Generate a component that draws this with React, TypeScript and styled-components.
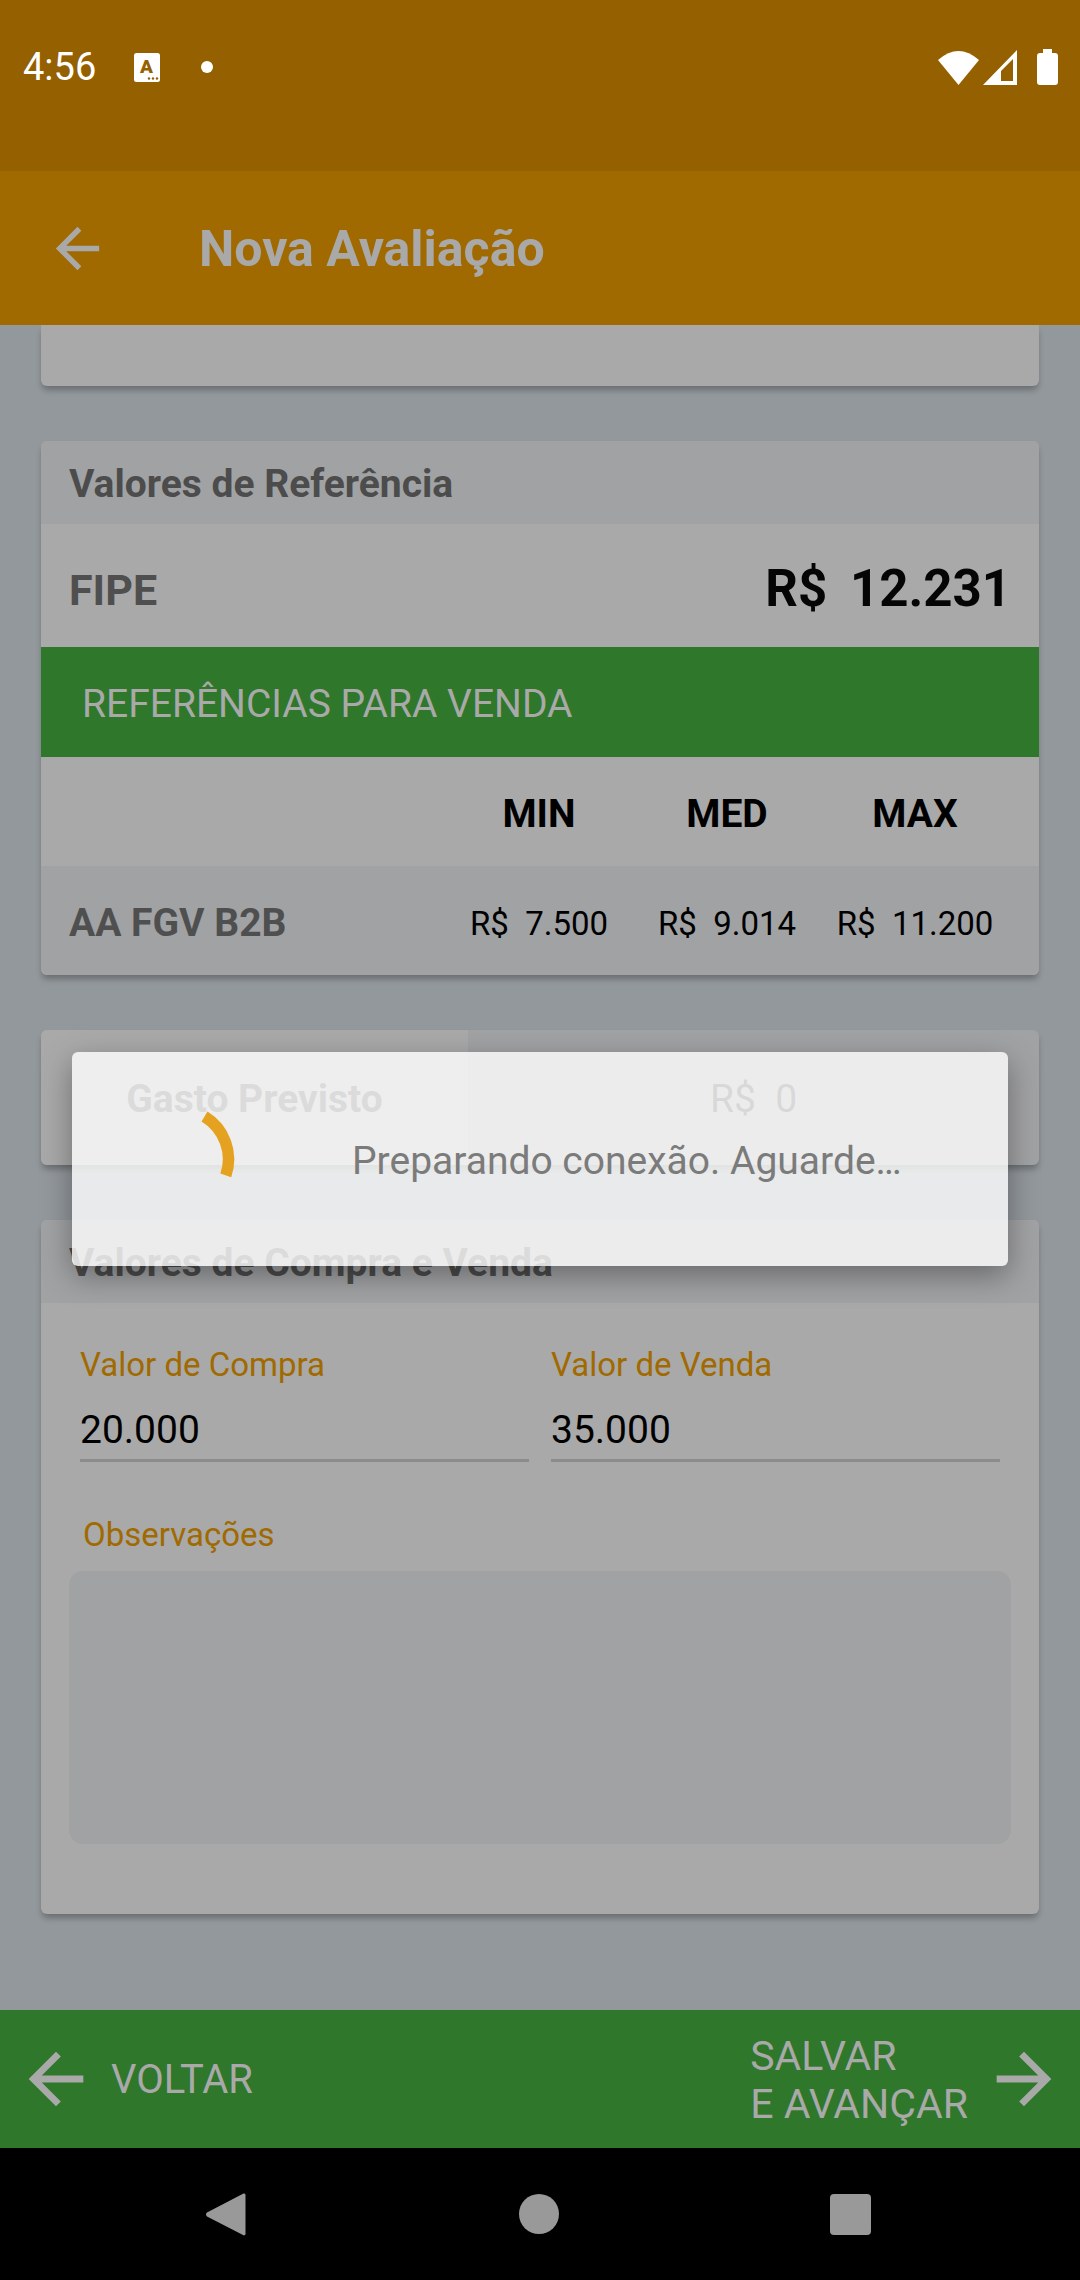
import React from "react";

import styled, { createGlobalStyle } from "styled-components";

const GlobalStyle = createGlobalStyle`
  html,
  body {
    margin: 0;
    padding: 0;
  }

  body {
    font-family: Roboto, "Liberation Sans", sans-serif;
  }
`;

const ARROW_PATH =
  "M20 11H7.83l5.59-5.59L12 4l-8 8 8 8 1.41-1.41L7.83 13H20v-2z";

function ArrowIcon(props: { size: number; flip?: boolean }): JSX.Element {
  return (
    <ArrowSvg
      $flip={props.flip}
      width={props.size}
      height={props.size}
      viewBox="0 0 24 24"
    >
      <path d={ARROW_PATH} fill="#a9a9a9" />
    </ArrowSvg>
  );
}

const PRICES = [
  { col: "MIN", value: "R$  7.500" },
  { col: "MED", value: "R$  9.014" },
  { col: "MAX", value: "R$  11.200" },
];

export default function App(): JSX.Element {
  return (
    <Page>
      <GlobalStyle />

      <StatusBar>
        <StatusLeft>
          <Clock>4:56</Clock>

          <svg width="26" height="29" viewBox="0 0 26 29">
            <rect width="26" height="29" rx="2.5" fill="#fff" />
            <text
              x="12.5"
              y="20"
              fontFamily="Roboto, sans-serif"
              fontSize="19"
              fontWeight="900"
              textAnchor="middle"
              fill="#956000"
            >
              A
            </text>
            <circle cx="15" cy="25.5" r="1.2" fill="#956000" />
            <circle cx="19" cy="25.5" r="1.2" fill="#956000" />
            <circle cx="23" cy="25.5" r="1.2" fill="#956000" />
          </svg>

          <StatusDot />
        </StatusLeft>

        <StatusRight>
          <svg width="41" height="34" viewBox="0 0 41 34">
            <path d="M0 9Q20.500-9 41 9L20.500 34Z" fill="#fff" />
          </svg>

          <svg width="34" height="35" viewBox="0 0 34 35">
            <path
              d="M0 35L34 0V35ZM18 31H30V9L18 21Z"
              fill="#fff"
              fillRule="evenodd"
            />
          </svg>

          <svg width="21" height="36" viewBox="0 0 21 36">
            <path
              d="M6 0H15V4H18A3 3 0 0 1 21 7V33A3 3 0 0 1 18 36H3A3 3 0 0 1 0 33V7A3 3 0 0 1 3 4H6Z"
              fill="#fff"
            />
          </svg>
        </StatusRight>
      </StatusBar>

      <AppBar>
        <AppBarIcon>
          <ArrowIcon size={65} />
        </AppBarIcon>

        <AppBarTitle>Nova Avaliação</AppBarTitle>
      </AppBar>

      <Content>
        <ClippedCard />

        <Card>
          <CardHeader>Valores de Referência</CardHeader>

          <FipeRow>
            <FipeLabel>FIPE</FipeLabel>
            <FipeValue>R$ 12.231</FipeValue>
          </FipeRow>

          <GreenRow>REFERÊNCIAS PARA VENDA</GreenRow>

          <PriceHead>
            <span />
            {PRICES.map((price) => (
              <PriceColumn key={price.col}>{price.col}</PriceColumn>
            ))}
          </PriceHead>

          <PriceRow>
            <RowLabel>AA FGV B2B</RowLabel>
            {PRICES.map((price) => (
              <PriceValue key={price.col}>{price.value}</PriceValue>
            ))}
          </PriceRow>
        </Card>

        <ExpenseCard>
          <ExpenseLabel>Gasto Previsto</ExpenseLabel>
          <ExpenseValue>R$  0</ExpenseValue>
        </ExpenseCard>

        <Card>
          <CardHeader>Valores de Compra e Venda</CardHeader>

          <FormBody>
            <FieldsRow>
              <Field>
                <FieldLabel>Valor de Compra</FieldLabel>
                <FieldValue>20.000</FieldValue>
              </Field>

              <Field>
                <FieldLabel>Valor de Venda</FieldLabel>
                <FieldValue>35.000</FieldValue>
              </Field>
            </FieldsRow>

            <NotesLabel>Observações</NotesLabel>
            <NotesBox />
          </FormBody>
        </Card>
      </Content>

      <BottomBar>
        <BottomAction>
          <ArrowIcon size={82} />
          <BackLabel>VOLTAR</BackLabel>
        </BottomAction>

        <BottomAction>
          <BottomLabel>
            SALVAR
            <br />E AVANÇAR
          </BottomLabel>
          <ArrowIcon size={82} flip />
        </BottomAction>
      </BottomBar>

      <NavBar>
        <svg width="40" height="45" viewBox="0 0 40 45">
          <path
            d="M37.500 1.500A1.500 1.500 0 0 1 39.500 3V42A1.500 1.500 0 0 1 37 43L1 24.500A2.500 2.500 0 0 1 1 20.500Z"
            fill="#999"
          />
        </svg>
        <NavCircle />
        <NavSquare />
      </NavBar>

      <Dialog>
        <svg width="120" height="120" viewBox="-60 -60 120 120">
          <path
            d="M26.500-42.500A50 50 0 0 1 47.800 16.400"
            fill="none"
            stroke="#e5a220"
            strokeWidth="11.500"
          />
        </svg>

        <DialogText>Preparando conexão. Aguarde…</DialogText>
      </Dialog>
    </Page>
  );
}

const Page = styled.div`
  position: relative;

  display: flex;
  flex-direction: column;

  width: 1080px;
  height: 2280px;
  overflow: hidden;

  background: #93989c;
`;

const StatusBar = styled.header`
  display: flex;
  justify-content: space-between;
  align-items: flex-start;

  height: 171px;
  padding: 49px 22px 0 23px;
  box-sizing: border-box;

  background: #956000;
`;

const StatusLeft = styled.div`
  display: flex;
  align-items: center;
  gap: 38px;

  height: 36px;
`;

const Clock = styled.span`
  font-size: 38px;
  line-height: 40px;

  color: #fff;
`;

const StatusDot = styled.span`
  width: 12px;
  height: 12px;
  margin-left: 3px;
  border-radius: 50%;

  background: #fff;
`;

const StatusRight = styled.div`
  display: flex;
  align-items: flex-end;
  gap: 4px;

  svg:last-child {
    margin-left: 16px;
  }
`;

const AppBar = styled.div`
  position: relative;
  z-index: 1;

  display: flex;
  align-items: center;

  height: 154px;

  background: #a06a00;
`;

const AppBarIcon = styled.div`
  display: flex;

  width: 199px;
  padding-left: 45px;
  box-sizing: border-box;
`;

const AppBarTitle = styled.h1`
  margin: 0;
  padding-top: 2px;

  font-size: 50px;
  font-weight: 700;

  color: #a9a9a9;
`;

const ArrowSvg = styled.svg<{ $flip?: boolean }>`
  flex-shrink: 0;

  transform: ${(props) => (props.$flip ? "scaleX(-1)" : "none")};
`;

const Content = styled.main`
  display: flex;
  flex: 1;
  flex-direction: column;
  gap: 55px;

  padding: 0 41px;
  min-height: 0;
`;

const Card = styled.section`
  border-radius: 6px;
  overflow: hidden;

  background: #a9a9a9;
  box-shadow: 0 5px 6px -1px rgba(0, 0, 0, 0.28);
`;

const ClippedCard = styled.div`
  height: 61px;
  border-radius: 0 0 6px 6px;

  background: #a9a9a9;
  box-shadow: 0 5px 6px -1px rgba(0, 0, 0, 0.28);
`;

const CardHeader = styled.h2`
  display: flex;
  align-items: center;

  height: 83px;
  margin: 0;
  padding: 2px 28px 0;
  box-sizing: border-box;

  font-size: 39px;
  font-weight: 700;

  color: #4c4c4c;
  background: #a1a2a4;
`;

const FipeRow = styled.div`
  display: flex;
  justify-content: space-between;
  align-items: center;

  height: 123px;
  padding: 5px 28px 0;
  box-sizing: border-box;
`;

const FipeLabel = styled.span`
  padding-top: 3px;

  font-size: 43px;
  font-weight: 700;

  color: #4f4f4f;
`;

const RowLabel = styled.span`
  font-size: 39px;
  font-weight: 700;

  color: #4f4f4f;
`;

const FipeValue = styled.span`
  font-size: 51px;
  font-weight: 700;
  word-spacing: 10px;

  color: #050505;
`;

const GreenRow = styled.div`
  display: flex;
  align-items: center;

  height: 110px;
  padding: 3px 41px 0;
  box-sizing: border-box;

  font-size: 39px;

  color: #a9a9a9;
  background: #2f772b;
`;

const PriceHead = styled.div`
  display: grid;
  grid-template-columns: 1fr repeat(3, 188px);
  align-items: center;

  height: 109px;
  padding: 5px 30px 0 28px;
  box-sizing: border-box;
`;

const PriceRow = styled(PriceHead)`
  background: #a1a2a4;
`;

const PriceColumn = styled.span`
  font-size: 39px;
  font-weight: 700;
  text-align: center;

  color: #000;
`;

const PriceValue = styled.span`
  font-size: 33px;
  text-align: center;
  white-space: pre;

  color: #000;
`;

const ExpenseCard = styled.section`
  display: grid;
  grid-template-columns: 427px 1fr;
  align-items: stretch;

  height: 135px;
  border-radius: 6px;
  overflow: hidden;

  background: #a1a2a4;
  box-shadow: 0 5px 6px -1px rgba(0, 0, 0, 0.28);
`;

const ExpenseLabel = styled.span`
  display: flex;
  justify-content: center;
  align-items: center;

  padding-top: 3px;

  font-size: 39px;
  font-weight: 700;

  color: #4c4c4c;
  background: #a9a9a9;
`;

const ExpenseValue = styled.span`
  display: flex;
  justify-content: center;
  align-items: center;

  padding-top: 3px;

  font-size: 39px;
  white-space: pre;

  color: #3c3c3c;
`;

const FormBody = styled.div`
  height: 611px;
  padding: 43px 28px 0;
  box-sizing: border-box;
`;

const FieldsRow = styled.div`
  display: grid;
  grid-template-columns: 449px 449px;
  gap: 22px;

  margin: 0 11px;
`;

const Field = styled.div`
  display: flex;
  flex-direction: column;
`;

const FieldLabel = styled.label`
  font-size: 33px;
  line-height: 38px;

  color: #a06a00;
`;

const FieldValue = styled.div`
  padding: 22px 0 5px;
  border-bottom: 3px solid #8c8c8c;

  font-size: 39px;
  line-height: 48px;

  color: #000;
`;

const NotesLabel = styled.div`
  margin: 54px 0 0 14px;

  font-size: 33px;
  line-height: 38px;

  color: #a06a00;
`;

const NotesBox = styled.div`
  height: 273px;
  margin-top: 17px;
  border-radius: 14px;

  background: #a1a2a4;
`;

const BottomBar = styled.footer`
  display: flex;
  justify-content: space-between;
  align-items: center;

  height: 138px;
  padding: 0 15px;

  background: #2f772b;
`;

const BottomAction = styled.div`
  display: flex;
  align-items: center;
  gap: 15px;
`;

const BottomLabel = styled.span`
  padding-top: 2px;

  font-size: 41px;
  line-height: 48px;

  color: #a9a9a9;
`;

const BackLabel = styled(BottomLabel)`
  margin-left: -1px;

  font-size: 40px;
`;

const NavBar = styled.nav`
  display: flex;
  justify-content: space-between;
  align-items: center;

  height: 132px;
  padding: 0 209px 0 206px;
  box-sizing: border-box;

  background: #000;
`;

const NavCircle = styled.span`
  width: 40px;
  height: 40px;
  margin-left: 1px;
  border-radius: 50%;

  background: #999;
`;

const NavSquare = styled.span`
  width: 41px;
  height: 41px;
  border-radius: 4px;

  background: #999;
`;

const Dialog = styled.div`
  position: absolute;
  top: 1052px;
  left: 72px;
  z-index: 2;

  display: flex;
  align-items: center;
  gap: 114px;

  width: 936px;
  height: 214px;
  padding-left: 46px;
  border-radius: 6px;
  box-sizing: border-box;

  background: rgba(255, 255, 255, 0.8);
  box-shadow: 0 10px 30px rgba(0, 0, 0, 0.35);
`;

const DialogText = styled.span`
  padding-top: 3px;

  font-size: 39px;

  color: #7b7b7b;
`;
